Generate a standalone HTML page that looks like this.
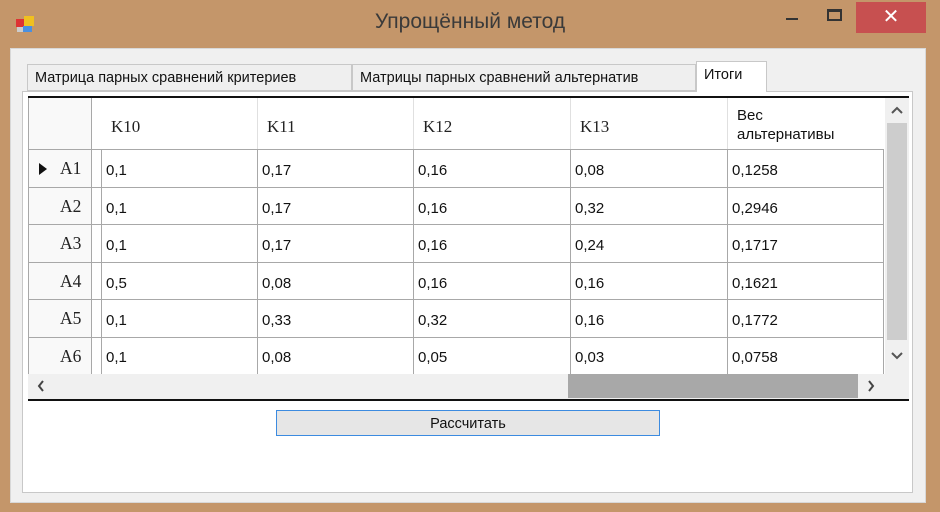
<!DOCTYPE html>
<html><head><meta charset="utf-8"><style>
*{box-sizing:border-box;margin:0;padding:0}
body{width:940px;height:512px;background:#c4966a;position:relative;overflow:hidden;font-family:"Liberation Sans",sans-serif}
.a{position:absolute}
.title{left:0;width:940px;top:10px;text-align:center;font-size:21px;color:#3a3a3a}
.client{left:10px;top:48px;width:916px;height:455px;background:#f0f0f0;border:1px solid #d8d8d8}
.tab{height:27px;top:64px;background:#efefef;border:1px solid #c8c8c8;font-size:14.5px;color:#111;padding:5px 0 0 7px;white-space:nowrap}
.panel{left:22px;top:91px;width:891px;height:402px;background:#fff;border:1px solid #c8c8c8}
.cell{font-size:15px;color:#111;white-space:nowrap}
.hd{font-family:"Liberation Serif",serif;font-size:17px;color:#222}
.rh{font-family:"Liberation Serif",serif;font-size:17.5px;color:#222}
.hl{background:#a8a8a8;height:1px}
.vl{background:#a8a8a8;width:1px}
</style></head><body>
<svg class="a" style="left:15px;top:14px" width="22" height="22" viewBox="0 0 22 22"><rect x="1" y="5" width="8" height="8" fill="#d33"/><rect x="9" y="2" width="10" height="10" fill="#f0c020"/><rect x="8" y="12" width="9" height="6" fill="#4a90e0"/><rect x="2" y="13" width="6" height="5" fill="#ccc"/></svg>
<div class="a title">Упрощённый метод</div>
<div class="a" style="left:786px;top:18px;width:12px;height:2px;background:#333"></div>
<div class="a" style="left:827px;top:9px;width:15px;height:12px;border:2px solid #333;border-top-width:3px"></div>
<div class="a" style="left:856px;top:2px;width:70px;height:31px;background:#c75050;color:#fff;font-size:20px;text-align:center;line-height:31px">✕</div>
<div class="a client"></div>
<div class="a tab" style="left:27px;width:325px">Матрица парных сравнений критериев</div>
<div class="a tab" style="left:352px;width:344px">Матрицы парных сравнений альтернатив</div>
<div class="a panel"></div>
<div class="a tab" style="left:696px;top:61px;height:31px;width:71px;background:#fff;border-bottom:none">Итоги</div>
<div class="a" style="left:28px;top:96px;width:881px;height:2px;background:#111"></div>
<div class="a" style="left:28px;top:98px;width:63px;height:276px;background:#f9f9f9"></div>
<div class="a" style="left:28px;top:98px;width:1px;height:276px;background:#a8a8a8"></div>
<div class="a vl" style="left:91px;top:98px;height:276px"></div>
<div class="a vl" style="left:101px;top:150px;height:224px"></div>
<div class="a vl" style="left:257px;top:98px;height:276px;background:#e0e0e0"></div>
<div class="a vl" style="left:413px;top:98px;height:276px;background:#e0e0e0"></div>
<div class="a vl" style="left:570px;top:98px;height:276px;background:#e0e0e0"></div>
<div class="a vl" style="left:727px;top:98px;height:276px;background:#e0e0e0"></div>
<div class="a vl" style="left:257px;top:150px;height:224px"></div>
<div class="a vl" style="left:413px;top:150px;height:224px"></div>
<div class="a vl" style="left:570px;top:150px;height:224px"></div>
<div class="a vl" style="left:727px;top:150px;height:224px"></div>
<div class="a vl" style="left:883px;top:150px;height:224px"></div>
<div class="a hl" style="left:28px;top:149px;width:856px"></div>
<div class="a hl" style="left:28px;top:187px;width:856px"></div>
<div class="a hl" style="left:28px;top:224px;width:856px"></div>
<div class="a hl" style="left:28px;top:262px;width:856px"></div>
<div class="a hl" style="left:28px;top:299px;width:856px"></div>
<div class="a hl" style="left:28px;top:337px;width:856px"></div>
<div class="a hd" style="left:111px;top:117px">K10</div>
<div class="a hd" style="left:267px;top:117px">K11</div>
<div class="a hd" style="left:423px;top:117px">K12</div>
<div class="a hd" style="left:580px;top:117px">K13</div>
<div class="a cell" style="left:737px;top:106px;line-height:19px">Вес<br>альтернативы</div>
<div class="a" style="left:39px;top:163px;width:0;height:0;border-left:8px solid #111;border-top:6px solid transparent;border-bottom:6px solid transparent"></div>
<div class="a rh" style="left:60px;top:158px">A1</div>
<div class="a rh" style="left:60px;top:196px">A2</div>
<div class="a rh" style="left:60px;top:233px">A3</div>
<div class="a rh" style="left:60px;top:271px">A4</div>
<div class="a rh" style="left:60px;top:308px">A5</div>
<div class="a rh" style="left:60px;top:346px">A6</div>
<div class="a cell" style="left:106px;top:162px">0,1</div><div class="a cell" style="left:262px;top:162px">0,17</div><div class="a cell" style="left:418px;top:162px">0,16</div><div class="a cell" style="left:575px;top:162px">0,08</div><div class="a cell" style="left:732px;top:162px">0,1258</div>
<div class="a cell" style="left:106px;top:200px">0,1</div><div class="a cell" style="left:262px;top:200px">0,17</div><div class="a cell" style="left:418px;top:200px">0,16</div><div class="a cell" style="left:575px;top:200px">0,32</div><div class="a cell" style="left:732px;top:200px">0,2946</div>
<div class="a cell" style="left:106px;top:237px">0,1</div><div class="a cell" style="left:262px;top:237px">0,17</div><div class="a cell" style="left:418px;top:237px">0,16</div><div class="a cell" style="left:575px;top:237px">0,24</div><div class="a cell" style="left:732px;top:237px">0,1717</div>
<div class="a cell" style="left:106px;top:275px">0,5</div><div class="a cell" style="left:262px;top:275px">0,08</div><div class="a cell" style="left:418px;top:275px">0,16</div><div class="a cell" style="left:575px;top:275px">0,16</div><div class="a cell" style="left:732px;top:275px">0,1621</div>
<div class="a cell" style="left:106px;top:312px">0,1</div><div class="a cell" style="left:262px;top:312px">0,33</div><div class="a cell" style="left:418px;top:312px">0,32</div><div class="a cell" style="left:575px;top:312px">0,16</div><div class="a cell" style="left:732px;top:312px">0,1772</div>
<div class="a cell" style="left:106px;top:349px">0,1</div><div class="a cell" style="left:262px;top:349px">0,08</div><div class="a cell" style="left:418px;top:349px">0,05</div><div class="a cell" style="left:575px;top:349px">0,03</div><div class="a cell" style="left:732px;top:349px">0,0758</div>
<div class="a" style="left:885px;top:98px;width:24px;height:276px;background:#f0f0f0"></div>
<div class="a" style="left:887px;top:123px;width:20px;height:217px;background:#cdcdcd"></div>
<svg class="a" style="left:891px;top:106px" width="12" height="8"><path d="M1 7 L6 2 L11 7" stroke="#555" stroke-width="2" fill="none"/></svg>
<svg class="a" style="left:891px;top:352px" width="12" height="8"><path d="M1 1 L6 6 L11 1" stroke="#555" stroke-width="2" fill="none"/></svg>
<div class="a" style="left:28px;top:374px;width:857px;height:25px;background:#f0f0f0"></div>
<div class="a" style="left:568px;top:374px;width:290px;height:24px;background:#a8a8a8"></div>
<div class="a" style="left:884px;top:374px;width:25px;height:25px;background:#f0f0f0"></div>
<svg class="a" style="left:37px;top:380px" width="8" height="12"><path d="M6 1 L2 6 L6 11" stroke="#444" stroke-width="2" fill="none"/></svg>
<svg class="a" style="left:867px;top:380px" width="8" height="12"><path d="M2 1 L6 6 L2 11" stroke="#444" stroke-width="2" fill="none"/></svg>
<div class="a" style="left:28px;top:399px;width:881px;height:2px;background:#111"></div>
<div class="a" style="left:276px;top:410px;width:384px;height:26px;background:#e6e6e6;border:1px solid #3c8be0;text-align:center;font-size:14.5px;line-height:26px;color:#111">Рассчитать</div>
</body></html>
